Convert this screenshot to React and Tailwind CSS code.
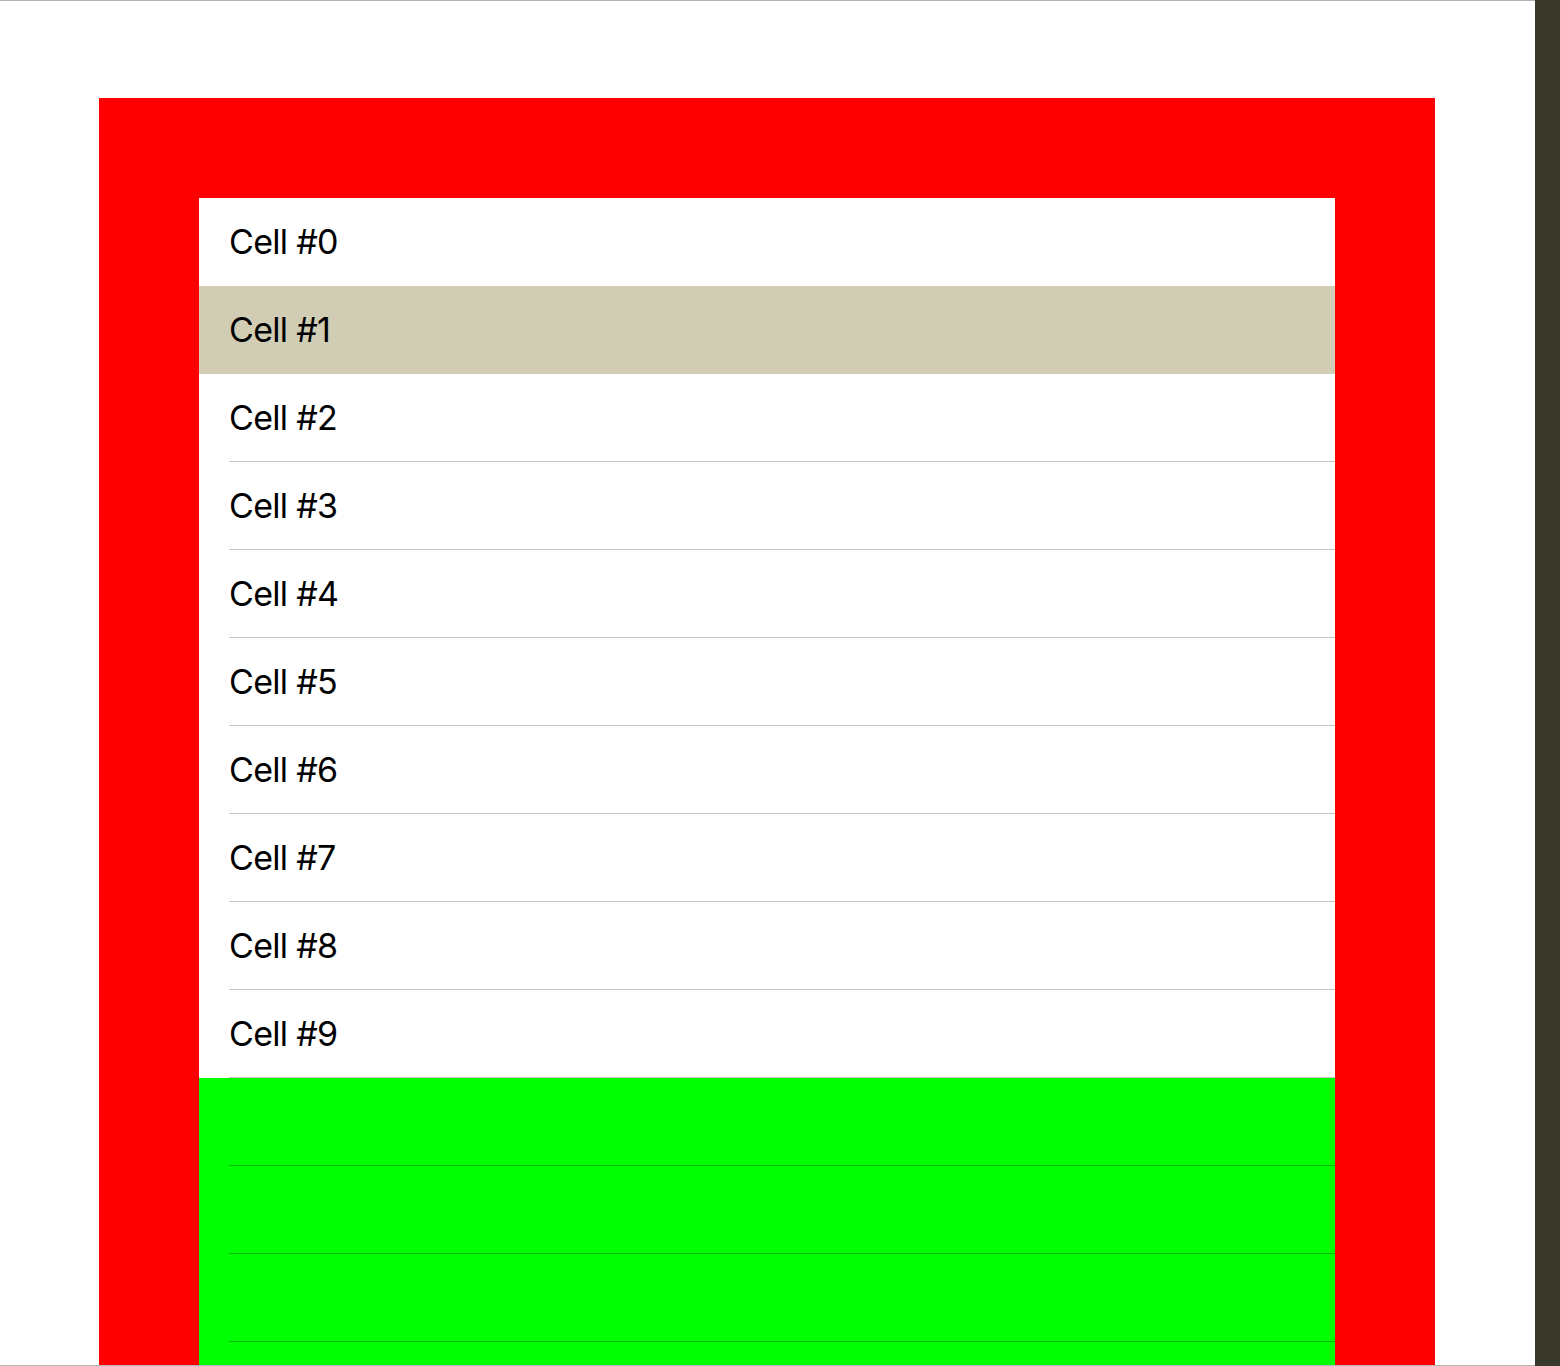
const cells = Array.from({ length: 10 }, (_, i) => i);
const selected = 1;

const Cell = ({ index }) => {
    const isSelected = index === selected;
    const hideSeparator = index === selected || index === selected - 1;
    return (
        <div className={`h-[88px] flex flex-col ${isSelected ? 'bg-[#d0cdb4]' : 'bg-white'}`}>
            <div className="flex-1 flex items-center pl-[30px] text-[34px] tracking-[-0.7px] text-black">
                Cell #{index}
            </div>
            <div className={`h-px ml-[30px] ${hideSeparator ? 'bg-transparent' : 'bg-[#c4c4c4]'}`}></div>
        </div>
    );
};

const App = () => {
    return (
        <div className="w-[1560px] h-[1366px] flex overflow-hidden bg-white" style={{ fontFamily: 'Inter, "Liberation Sans", sans-serif' }}>
            <div className="w-[1535px] h-full flex flex-col border-t border-b border-[#b4b4b4] overflow-hidden">
                <div className="ml-[99px] mt-[97px] w-[1336px] flex-1 bg-[#ff0000] pt-[100px] px-[100px] overflow-hidden">
                    <div className="flex flex-col">
                        {cells.map(i => (
                            <Cell key={i} index={i} />
                        ))}
                        {[0, 1, 2, 3].map(i => (
                            <div key={i} className="h-[88px] bg-[#00ff00] flex flex-col">
                                <div className="flex-1"></div>
                                <div className="h-px ml-[30px] bg-[#00b400]"></div>
                            </div>
                        ))}
                    </div>
                </div>
            </div>
            <div className="w-[25px] h-full bg-[#38382a]"></div>
        </div>
    );
};

export default App;
